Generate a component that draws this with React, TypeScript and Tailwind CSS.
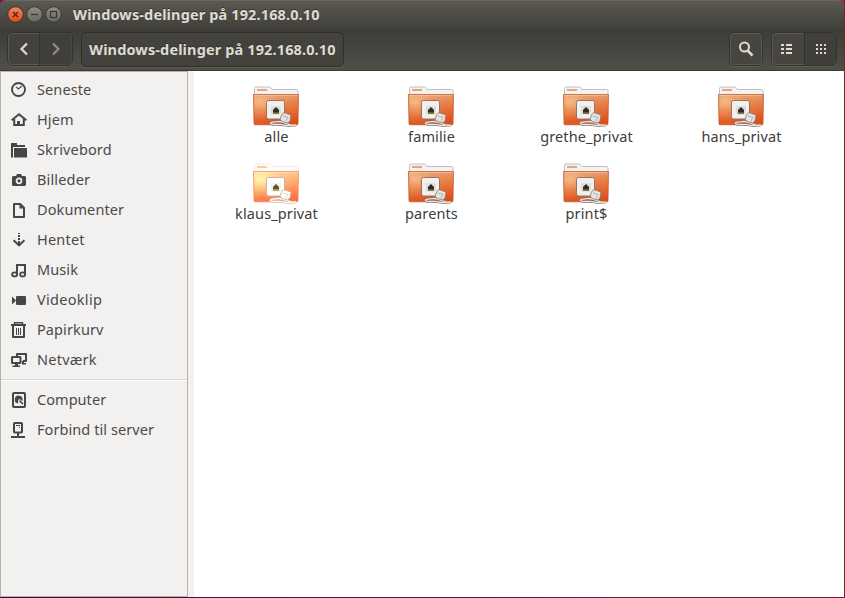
import type { ReactNode } from "react";

const ink = "#464644";

type Place = { label: string; spacing: string; icon: ReactNode };

const places: Place[] = [
  {
    label: "Seneste",
    spacing: "tracking-[0.1px]",
    icon: (
      <>
        <circle cx="7.5" cy="7.5" r="6.5" fill="none" stroke={ink} strokeWidth="1.9" />
        <path d="M5 4.8 7.3 7 11 4" fill="none" stroke={ink} strokeWidth="1.1" />
      </>
    ),
  },
  {
    label: "Hjem",
    spacing: "tracking-[0.1px]",
    icon: (
      <>
        <path d="M.6 8.2 8 2.2l7.4 6" fill="none" stroke={ink} strokeWidth="2" />
        <path d="M3.2 7v6.1h9.6V7" fill="none" stroke={ink} strokeWidth="2" />
        <path d="M6 9h3v5H6z" fill={ink} />
      </>
    ),
  },
  {
    label: "Skrivebord",
    spacing: "tracking-[0.15px]",
    icon: (
      <>
        <path d="M0 1h6v2h8v2H2v10.5H0z" fill={ink} />
        <path d="M3 6h13v9.5H3z" fill={ink} />
      </>
    ),
  },
  {
    label: "Billeder",
    spacing: "tracking-[0.15px]",
    icon: (
      <>
        <path d="M5 4l1-2h4l1 2h3l1 1v8l-1 1H2l-1-1V5l1-1z" fill={ink} />
        <circle cx="8" cy="8.8" r="2.5" fill={ink} stroke="#f2f1f0" strokeWidth="1.7" />
      </>
    ),
  },
  {
    label: "Dokumenter",
    spacing: "tracking-[0.1px]",
    icon: (
      <>
        <path d="M3 2h6.2L13 5.8V15H3z" fill="none" stroke={ink} strokeWidth="2" strokeLinejoin="round" />
        <path d="M8.5 2v4.5H13" fill={ink} />
      </>
    ),
  },
  {
    label: "Hentet",
    spacing: "tracking-[0.2px]",
    icon: (
      <>
        <path d="M7 1h2v1H7zM7 3h2v2H7zM7 6h2v2H7zM7 9h2v4H7z" fill={ink} />
        <path d="M2.6 8.2 8 13.4l5.4-5.2" fill="none" stroke={ink} strokeWidth="2" />
      </>
    ),
  },
  {
    label: "Musik",
    spacing: "tracking-[0.1px]",
    icon: (
      <>
        <path d="M6 12.5V3h8v9.5" fill="none" stroke={ink} strokeWidth="2" />
        <ellipse cx="3.6" cy="12.4" rx="2.5" ry="2" fill="none" stroke={ink} strokeWidth="1.8" />
        <ellipse cx="11.6" cy="12.4" rx="2.5" ry="2" fill="none" stroke={ink} strokeWidth="1.8" />
      </>
    ),
  },
  {
    label: "Videoklip",
    spacing: "tracking-[0.3px]",
    icon: (
      <>
        <path d="M1 4.5l4 4-4 4z" fill={ink} />
        <rect x="5" y="4" width="10" height="9" rx="1" fill={ink} />
      </>
    ),
  },
  {
    label: "Papirkurv",
    spacing: "tracking-[0.1px]",
    icon: (
      <>
        <path d="M3.5 2.5V.8h8v1.7" fill="none" stroke={ink} strokeWidth="1.4" />
        <path d="M0 2h15v2H0z" fill={ink} />
        <path d="M2 4v10.9h11V4" fill="none" stroke={ink} strokeWidth="2" strokeLinejoin="round" />
        <path d="M5.5 6v7M7.5 6v7M9.5 6v7" stroke={ink} strokeWidth="1" />
      </>
    ),
  },
  {
    label: "Netværk",
    spacing: "tracking-[0.25px]",
    icon: (
      <>
        <path d="M6 4V2h9v7h-3" fill="none" stroke={ink} strokeWidth="2" strokeLinejoin="round" />
        <path d="M11 9h2v2h2v1.500h-4z" fill={ink} />
        <rect x="1" y="5" width="8.5" height="6" rx=".6" fill="none" stroke={ink} strokeWidth="2" />
        <path d="M4 12h3v1.500h2V15H1.500v-1.500H4z" fill={ink} />
      </>
    ),
  },
];

const devices: Place[] = [
  {
    label: "Computer",
    spacing: "tracking-[0.05px]",
    icon: (
      <>
        <rect x="2" y="1" width="12" height="14" rx="1" fill="none" stroke={ink} strokeWidth="2" />
        <path d="M7.2 11.4a3.9 3.9 0 1 1 4.4-3.7l.1 1.3-3.4-2-1.3 1.4z" fill={ink} />
        <path d="M8.5 8.5l3.4 3.6" stroke={ink} strokeWidth="1.6" />
      </>
    ),
  },
  {
    label: "Forbind til server",
    spacing: "tracking-[0.07px]",
    icon: (
      <>
        <rect x="3" y="1" width="8" height="9.5" rx=".8" fill="none" stroke={ink} strokeWidth="2" />
        <path d="M5 3.5h4M8 5.5h1" stroke={ink} strokeWidth="1" />
        <path d="M6 11h2v3h6v2H0v-2h6z" fill={ink} />
      </>
    ),
  },
];

const folders = [
  { label: "alle" },
  { label: "familie" },
  { label: "grethe_privat" },
  { label: "hans_privat" },
  { label: "klaus_privat", highlighted: true },
  { label: "parents" },
  { label: "print$" },
];

function ShareFolder({ highlighted }: { highlighted?: boolean }) {
  const id = highlighted ? "lit" : "plain";
  const cable = "M44 38.800c-3 1.200-6 .3-9-1.200s-6-2.500-10-2-7 .5-6.500 2 5 .8 9 .8 7 1.700 11 1.200";
  return (
    <svg width="48" height="41" viewBox="0 0 48 41" className="mr-px block">
      <defs>
        <linearGradient id={`body-${id}`} x1="0.2" y1="0" x2="0.45" y2="1">
          <stop offset="0" stopColor={highlighted ? "#ffd9a8" : "#e9ae84"} />
          <stop offset="0.4" stopColor={highlighted ? "#ffb577" : "#e8834c"} />
          <stop offset="1" stopColor={highlighted ? "#ff7140" : "#de4f18"} />
        </linearGradient>
        <radialGradient id={`glow-${id}`} cx="0.15" cy="0.25" r="0.6">
          <stop offset="0" stopColor={highlighted ? "#ffffb8" : "#f5bf8b"} stopOpacity="0.9" />
          <stop offset="1" stopColor={highlighted ? "#ffd080" : "#ee8a50"} stopOpacity="0" />
        </radialGradient>
      </defs>
      <path
        d="M2.500 10V2.500q0-1.500 1.500-1.500h13.500q1 0 1.500 1l1 1.500h24.500q1.500 0 1.500 1.500V10z"
        fill={highlighted ? "#fffdfc" : "#f4f3f2"}
        stroke={highlighted ? "#f1ecea" : "#c2c0be"}
        strokeWidth="1"
      />
      <path d="M5 4h10" stroke={highlighted ? "#ffc79a" : "#eda27a"} strokeWidth="2" />
      <path d="M1.500 8.500h45l-.5 29.300q0 1-1 1H3q-1 0-1-1z" fill={`url(#body-${id})`} />
      <path
        d="M1.500 8.500h45l-.5 29.300q0 1-1 1H3q-1 0-1-1z"
        fill={`url(#glow-${id})`}
        stroke={highlighted ? "#f58450" : "#c4501f"}
        strokeOpacity=".8"
        strokeWidth=".9"
      />
      <path d="M2.500 9.400h43" stroke="#fff" strokeOpacity=".35" strokeWidth=".8" />
      <rect
        x="14.500"
        y="14.500"
        width="18"
        height="18.500"
        rx="2"
        fill={highlighted ? "#fff" : "#f0f0ee"}
        stroke={highlighted ? "#c9ab9b" : "#94695a"}
        strokeWidth=".9"
      />
      <rect x="19" y="20" width="10" height="8.500" rx="1" fill={highlighted ? "#f3f1ed" : "#deded9"} />
      <path d="M21 27.500v-4h1v-1h1v-1h2v1h1v1h1v4z" fill={highlighted ? "#565446" : "#2c2c28"} />
      <path d="M21 26.800h6" stroke={highlighted ? "#cdae1f" : "#746626"} strokeWidth="1.300" />
      <path d={cable} fill="none" stroke={highlighted ? "#d5b4a4" : "#8a665a"} strokeWidth="2.500" />
      <path d={cable} fill="none" stroke={highlighted ? "#fffaf7" : "#eae8e6"} strokeWidth="1.400" />
      <path
        d="M29.500 29l2-2.500 3 1 4.500 1.500-1 6-2.500 2-5-1.500-2.500-2z"
        fill={highlighted ? "#fffdfa" : "#e5e4e1"}
        stroke={highlighted ? "#c5aa9c" : "#8d756b"}
        strokeWidth=".8"
      />
      <path d="M31 30l5.500 1.500M35.500 31.500l-1.500 4" stroke={highlighted ? "#d9d2cd" : "#aaa49f"} strokeWidth=".8" />
    </svg>
  );
}

function PlaceRow({ place }: { place: Place }) {
  return (
    <li className="flex h-[30px] items-center gap-2.5 pl-2.5">
      <svg width="16" height="16" viewBox="0 0 16 16" className="shrink-0">
        {place.icon}
      </svg>
      <span className={`whitespace-nowrap pb-0.5 text-[14.5px] leading-5 text-[#4a4a48] ${place.spacing}`}>
        {place.label}
      </span>
    </li>
  );
}

const buttonFrame = "rounded-[5px] border border-[#33322e] shadow-[inset_0_0_0_1px_#5b5a52,0_1px_0_#5d5c55]";

export default function App() {
  return (
    <div className="flex h-[598px] w-[845px] flex-col overflow-hidden bg-linear-to-r from-[#2c1230] to-[#792032] pr-px pb-px font-['Noto_Sans','Open_Sans',sans-serif]">
      <header className="h-[71px] shrink-0 bg-linear-to-r from-[#6a1a5c] to-[#9c2f2c]">
        <div className="flex h-[29px] items-center rounded-t-[6px] border-t border-[#6b6960] bg-linear-to-b from-[#5b5950] to-[#403f3a] pl-[7px]">
          <svg width="57" height="18" viewBox="0 0 57 18" className="shrink-0">
            <defs>
              <linearGradient id="close" x1="0" y1="0" x2="0" y2="1">
                <stop offset="0" stopColor="#f58562" />
                <stop offset="1" stopColor="#df4b16" />
              </linearGradient>
              <linearGradient id="gray" x1="0" y1="0" x2="0" y2="1">
                <stop offset="0" stopColor="#918f86" />
                <stop offset="1" stopColor="#66655e" />
              </linearGradient>
            </defs>
            <circle cx="8.500" cy="8.500" r="7.800" fill="url(#close)" stroke="#37362f" />
            <path d="M6 6l5 5M11 6l-5 5" stroke="#47251a" strokeWidth="1.300" />
            <circle cx="27.500" cy="8.500" r="7.800" fill="url(#gray)" stroke="#37362f" />
            <path d="M24 8.500h7" stroke="#37362f" strokeWidth="1.200" />
            <circle cx="46.500" cy="8.500" r="7.800" fill="url(#gray)" stroke="#37362f" />
            <rect x="43.500" y="5.500" width="6" height="6" fill="none" stroke="#37362f" strokeWidth="1.200" />
          </svg>
          <h1 className="ml-[9px] whitespace-nowrap pb-0.5 text-[14.5px] leading-5 font-bold tracking-[0.13px] text-[#dfdbd2] [text-shadow:0_-1px_0_#33322e]">
            Windows-delinger på 192.168.0.10
          </h1>
        </div>
        <div className="flex h-[42px] items-start border-b border-[#3c3b37] bg-linear-to-b from-[#3d3c38] to-[#504e47] pt-[3px] pr-[7px] pl-[7px]">
          <nav className={`flex h-[34px] w-[66px] overflow-hidden bg-[#43423d] ${buttonFrame}`}>
            <button className="flex w-8 items-center justify-center border-r border-[#33322e]">
              <svg width="10" height="14" viewBox="0 0 10 14">
                <path d="M8 1.500 2.500 7 8 12.500" fill="none" stroke="#dfdbd2" strokeWidth="2.200" />
              </svg>
            </button>
            <button className="flex flex-1 items-center justify-center bg-[#3d3c37]/60">
              <svg width="10" height="14" viewBox="0 0 10 14">
                <path d="M2 1.500 7.500 7 2 12.500" fill="none" stroke="#8e8c84" strokeWidth="2.200" />
              </svg>
            </button>
          </nav>
          <button className="ml-2 flex h-[35px] w-[263px] items-center rounded-[5px] border border-[#2f2e2a] bg-[#43423d] pl-[7px] shadow-[0_1px_0_#5d5c55]">
            <span className="whitespace-nowrap pb-0.5 text-[14.5px] leading-5 font-bold tracking-[0.13px] text-[#dfdbd2] [text-shadow:0_-1px_0_#33322e]">
              Windows-delinger på 192.168.0.10
            </span>
          </button>
          <button className={`ml-auto flex h-[34px] w-[34px] items-center justify-center bg-[#464540] ${buttonFrame}`}>
            <svg width="16" height="16" viewBox="0 0 16 16">
              <circle cx="6.500" cy="6" r="4.500" fill="none" stroke="#dfdbd2" strokeWidth="2" />
              <path d="M9.500 9.500l5 5" stroke="#dfdbd2" strokeWidth="2.500" />
            </svg>
          </button>
          <div className={`ml-2 flex h-[34px] w-[66px] overflow-hidden bg-[#464540] ${buttonFrame}`}>
            <button className="flex w-8 items-center justify-center pr-0.5">
              <svg width="12" height="10" viewBox="0 0 12 10">
                <path d="M0 0h3v2H0zM5 0h6v2H5zM0 4h3v2H0zM5 4h6v2H5zM0 8h3v2H0zM5 8h6v2H5z" fill="#dfdbd2" />
              </svg>
            </button>
            <button className="flex flex-1 items-center justify-center border-l border-[#302f2b] bg-[#413f3b]">
              <svg width="12" height="10" viewBox="0 0 12 10">
                <path d="M1 0h2v2H1zM5 0h2v2H5zM9 0h2v2H9zM1 4h2v2H1zM5 4h2v2H5zM9 4h2v2H9zM1 8h2v2H1zM5 8h2v2H5zM9 8h2v2H9z" fill="#dfdbd2" />
              </svg>
            </button>
          </div>
        </div>
      </header>
      <div className="flex min-h-0 flex-1 bg-[#f2f1f0]">
        <aside className="w-[188px] shrink-0 border border-[#b6b2ac] bg-[#f2f1f0] pt-[3px]">
          <ul>
            {places.map((place) => (
              <PlaceRow key={place.label} place={place} />
            ))}
          </ul>
          <hr className="mt-1 mb-1 h-0.5 border-0 border-t border-b border-t-[#d9d7d5] border-b-white" />
          <ul>
            {devices.map((place) => (
              <PlaceRow key={place.label} place={place} />
            ))}
          </ul>
        </aside>
        <main className="ml-1.5 grid flex-1 auto-rows-[77px] grid-cols-[repeat(4,155px)] content-start bg-white pt-[15px] pl-[5px]">
          {folders.map((folder) => (
            <figure key={folder.label} className="flex flex-col items-center">
              <ShareFolder highlighted={folder.highlighted} />
              <figcaption className="-mt-px whitespace-nowrap text-[14.5px] leading-5 tracking-[0.12px] text-[#3c3c3c]">
                {folder.label}
              </figcaption>
            </figure>
          ))}
        </main>
      </div>
    </div>
  );
}
